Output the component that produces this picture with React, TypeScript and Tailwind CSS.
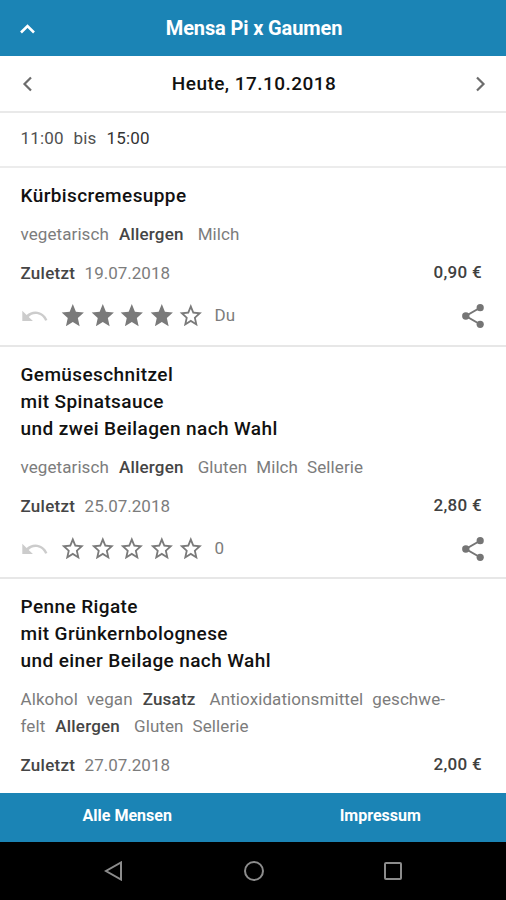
const starPath =
  "M22 9.24l-7.19-.62L12 2 9.19 8.63 2 9.24l5.46 4.73L5.82 21 12 17.27 18.18 21l-1.63-7.03L22 9.24zM12 15.4l-3.76 2.27 1-4.28-3.32-2.88 4.38-.38L12 6.1l1.71 4.04 4.38.38-3.32 2.88 1 4.28L12 15.4z";
const starFullPath =
  "M12 17.27L18.18 21l-1.64-7.03L22 9.24l-7.19-.61L12 2 9.19 8.63 2 9.24l5.46 4.73L5.82 21z";

function Star({ full }: { full: boolean }) {
  return (
    <svg viewBox="0 0 24 24" className="h-[29.6px] w-[29.6px] shrink-0 scale-x-[0.9] scale-y-[0.95] fill-[#7a7a7a]">
      <path d={full ? starFullPath : starPath} />
    </svg>
  );
}

type Tag = { text: string; strong?: boolean };

function TagLine({ tags }: { tags: Tag[] }) {
  return (
    <div className="flex h-[27px] items-center whitespace-nowrap text-[17px] tracking-[0.09px] text-[#7c7c7c]">
      {tags.map((t, i) => (
        <span
          key={i}
          className={
            t.strong
              ? "ml-[10px] mr-[5px] font-medium tracking-[0.2px] text-[#454545] first:ml-0"
              : "ml-[9px] first:ml-0"
          }
        >
          {t.text}
        </span>
      ))}
    </div>
  );
}

type MealProps = {
  title: string[];
  tags: Tag[][];
  last: string;
  price: string;
  rating?: { stars: number; label: string };
};

function Meal({ title, tags, last, price, rating }: MealProps) {
  return (
    <section className="shrink-0 border-b-2 border-[#e7e7e7] pl-[20.5px] pr-5 pt-[14px] first:pb-px last:border-b-0">
      <h2 className="text-[19px] font-medium leading-[27px] tracking-[0.4px] text-[#111]">
        {title.map((l) => (
          <span key={l} className="block whitespace-nowrap">
            {l}
          </span>
        ))}
      </h2>
      <div className="mt-3">
        {tags.map((l, i) => (
          <TagLine key={i} tags={l} />
        ))}
      </div>
      <div className="mt-3 flex h-[27px] items-center text-[17px] text-[#7c7c7c]">
        <span className="font-medium tracking-[0.25px] text-[#454545]">Zuletzt</span>
        <span className="ml-[9.5px]">{last}</span>
        <span className="mb-px ml-auto mr-[4px] font-medium tracking-[0.3px] text-[#404040]">{price}</span>
      </div>
      {rating && <Rating stars={rating.stars} label={rating.label} />}
    </section>
  );
}

function Rating({ stars, label }: { stars: number; label: string }) {
  return (
    <div className="flex h-[57px] items-center">
      <svg viewBox="0 0 26 13" className="ml-[1.5px] h-[13px] w-[26px] shrink-0 fill-[#cccccc]">
        <path d="M0.300 1.700V12h10.600L6.700 8C8.500 6.300 10.800 5 13.400 5c4.500 0 8 2.700 9.700 6.800l2.300-.7C23.600 6 18.900 2.500 13.400 2.500c-3.400 0-6.400 1.400-8.800 3.500z" />
      </svg>
      <div className="ml-[10px] flex">
        {[0, 1, 2, 3, 4].map((i) => (
          <Star key={i} full={i < stars} />
        ))}
      </div>
      <span className="ml-[8.5px] text-[17px] text-[#7c7c7c]">{label}</span>
      <svg viewBox="0 0 22 24" className="ml-auto mr-[2px] h-[24px] w-[22px] fill-[#757575] stroke-[#757575]">
        <path d="M18.500 3.500 3.800 12l14.700 8.500" fill="none" strokeWidth="2" />
        <circle cx="18.200" cy="3.700" r="3.600" stroke="none" />
        <circle cx="3.800" cy="12" r="3.700" stroke="none" />
        <circle cx="18.200" cy="20.300" r="3.600" stroke="none" />
      </svg>
    </div>
  );
}

export default function App() {
  return (
    <div className="flex h-[900px] w-[506px] flex-col overflow-hidden bg-white font-['Roboto',sans-serif]">
      <header className="flex h-14 shrink-0 items-center bg-[#1b84b5] px-5 text-white">
        <svg viewBox="0 0 16 16" className="h-4 w-4 fill-none stroke-white stroke-[2.6]">
          <path d="M1 12.500 7.500 6 14 12.500" />
        </svg>
        <h1 className="mr-4 flex-1 pl-[2px] text-center text-[20px] font-bold tracking-[-0.13px]">Mensa Pi x Gaumen</h1>
      </header>
      <div className="flex h-[57px] shrink-0 items-center border-b-2 border-[#e9e9e9] px-5">
        <svg viewBox="0 0 16 16" className="h-4 w-4 fill-none stroke-[#6c6c6c] stroke-[2.2]">
          <path d="M11 1.500 4.500 8l6.500 6.500" />
        </svg>
        <div className="flex-1 pt-[2px] text-center text-[19px] font-medium tracking-[0.45px] text-[#111]">
          Heute, 17.10.2018
        </div>
        <svg viewBox="0 0 16 16" className="mr-[-2px] h-4 w-4 fill-none stroke-[#6c6c6c] stroke-[2.2]">
          <path d="M5 1.500 11.500 8 5 14.500" />
        </svg>
      </div>
      <div className="flex h-[55px] shrink-0 items-center gap-[10px] border-b-2 border-[#ececec] pb-px pl-[20.5px] text-[17px] tracking-[0.15px] text-[#505050]">
        <span>11:00</span>
        <span>bis</span>
        <span className="text-[#333]">15:00</span>
      </div>
      <main className="flex min-h-0 flex-1 flex-col overflow-hidden">
        <Meal
          title={["Kürbiscremesuppe"]}
          tags={[[{ text: "vegetarisch" }, { text: "Allergen", strong: true }, { text: "Milch" }]]}
          last="19.07.2018"
          price="0,90 €"
          rating={{ stars: 4, label: "Du" }}
        />
        <Meal
          title={["Gemüseschnitzel", "mit Spinatsauce", "und zwei Beilagen nach Wahl"]}
          tags={[
            [
              { text: "vegetarisch" },
              { text: "Allergen", strong: true },
              { text: "Gluten" },
              { text: "Milch" },
              { text: "Sellerie" },
            ],
          ]}
          last="25.07.2018"
          price="2,80 €"
          rating={{ stars: 0, label: "0" }}
        />
        <Meal
          title={["Penne Rigate", "mit Grünkernbolognese", "und einer Beilage nach Wahl"]}
          tags={[
            [
              { text: "Alkohol" },
              { text: "vegan" },
              { text: "Zusatz", strong: true },
              { text: "Antioxidationsmittel" },
              { text: "geschwe-" },
            ],
            [
              { text: "felt" },
              { text: "Allergen", strong: true },
              { text: "Gluten" },
              { text: "Sellerie" },
            ],
          ]}
          last="27.07.2018"
          price="2,00 €"
        />
      </main>
      <footer className="grid h-[49px] shrink-0 grid-cols-2 items-center bg-[#1b84b5] pb-[3px] pl-[1px] text-center text-[16px] font-bold text-white">
        <span>Alle Mensen</span>
        <span className="pl-[1px]">Impressum</span>
      </footer>
      <nav className="flex h-[58px] shrink-0 items-center justify-between bg-black pl-[104px] pr-[103px]">
        <svg viewBox="0 0 20 20" className="h-5 w-5 fill-none stroke-[#8c8c8c] stroke-2">
          <path d="M17 1.500v17L2 10z" />
        </svg>
        <svg viewBox="0 0 20 20" className="h-5 w-5 fill-none stroke-[#8c8c8c] stroke-2">
          <circle cx="10" cy="10" r="9" />
        </svg>
        <svg viewBox="0 0 20 20" className="h-5 w-5 fill-none stroke-[#8c8c8c] stroke-2">
          <rect x="2" y="2" width="16" height="16" rx="1" />
        </svg>
      </nav>
    </div>
  );
}
